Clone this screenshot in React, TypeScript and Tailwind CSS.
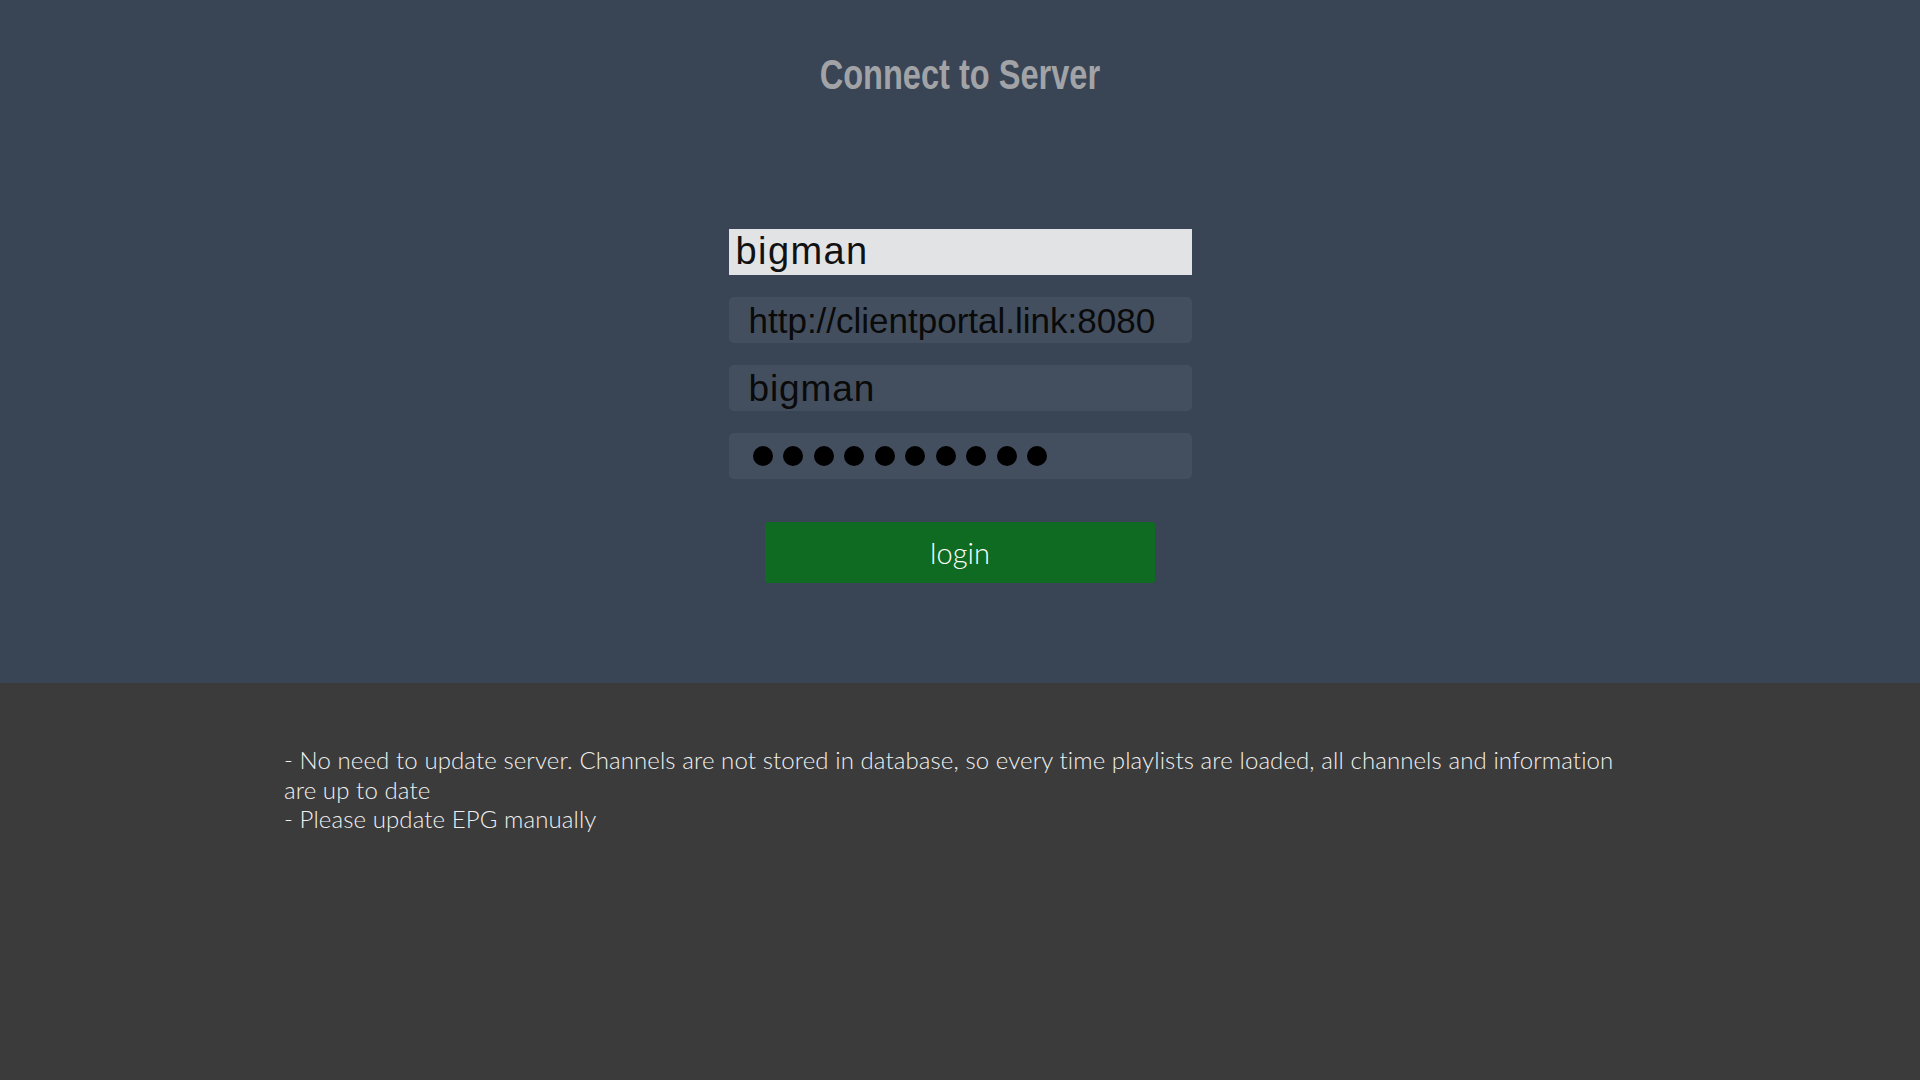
import React from "react";

export default function App() {
  const dots = Array.from({ length: 10 });
  return (
    <div className="w-[1920px] h-[1080px] flex flex-col overflow-hidden" style={{ fontFamily: '"Liberation Sans", Arial, sans-serif' }}>
      <div className="h-[683px] bg-[#394555] flex flex-col items-center">
        <div className="mt-[52px] h-[46px] flex items-center justify-center">
          <h1 className="text-[42px] font-bold text-[#a2a3a7] leading-none scale-x-[0.775] whitespace-nowrap">
            Connect to Server
          </h1>
        </div>
        <div className="mt-[131px] w-[463px] flex flex-col gap-[22px]">
          <div className="h-[46px] bg-[#e2e3e5] flex items-center pl-[7px] pb-[2px]">
            <span className="text-[38px] text-[#111] leading-none tracking-[1.4px]">bigman</span>
          </div>
          <div className="h-[46px] bg-[#434f5f] rounded-[5px] flex items-center pl-[20px]">
            <span className="text-[35px] text-[#0a0a0a] leading-none">http://clientportal.link:8080</span>
          </div>
          <div className="h-[46px] bg-[#434f5f] rounded-[5px] flex items-center pl-[20px]">
            <span className="text-[37px] text-[#0a0a0a] leading-none tracking-[0.9px]">bigman</span>
          </div>
          <div className="h-[46px] bg-[#434f5f] rounded-[5px] flex items-center pl-[24px] gap-[10.5px]">
            {dots.map((_, i) => (
              <div key={i} className="w-[20px] h-[20px] rounded-full bg-black" />
            ))}
          </div>
        </div>
        <button className="mt-[43px] w-[390px] h-[61px] bg-[#0f6b22] rounded-[3px] flex items-center justify-center">
          <span className="font-['Lato',sans-serif] font-light text-[29px] text-white leading-none pb-[1px]">login</span>
        </button>
      </div>
      <div className="flex-1 bg-[#3b3b3b] pl-[284px] pt-[62px]">
        <div className="font-['Lato',sans-serif] font-light text-[24px] leading-[29.5px] text-[#f0f0f0] tracking-[0.1px] whitespace-nowrap">
          <div>- No need to update server. Channels are not stored in database, so every time playlists are loaded, all channels and information</div>
          <div>are up to date</div>
          <div>- Please update EPG manually</div>
        </div>
      </div>
    </div>
  );
}
